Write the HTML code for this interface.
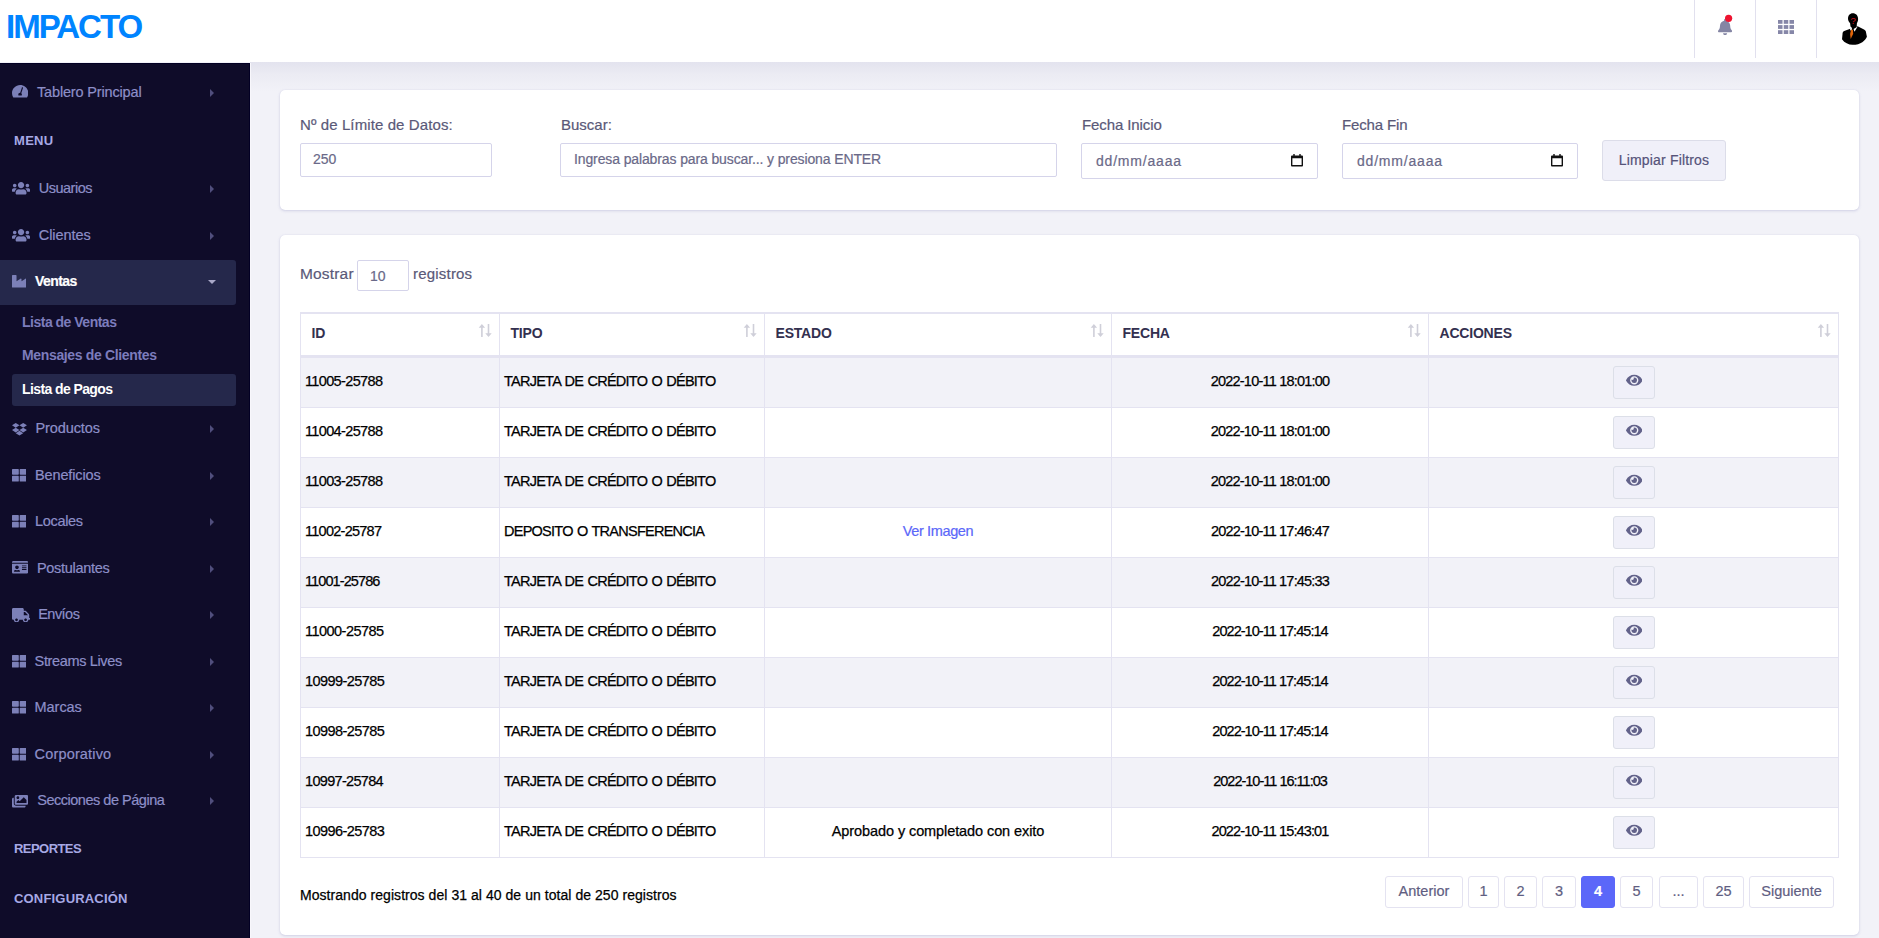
<!DOCTYPE html>
<html lang="es">
<head>
<meta charset="utf-8">
<title>IMPACTO - Lista de Pagos</title>
<style>
*{box-sizing:border-box;margin:0;padding:0}
html,body{width:1879px;height:938px;overflow:hidden}
body{font-family:"Liberation Sans",sans-serif;background:#f2f2f8;color:#000;font-size:14px;position:relative}
/* header */
.hdr{position:absolute;left:0;top:0;width:1879px;height:62px;background:#fff;z-index:5}
.hdr-shadow{position:absolute;left:250px;top:62px;width:1629px;height:30px;background:linear-gradient(#e3e3ee,#ebebf3 40%,#f2f2f8);z-index:1}
.logo{position:absolute;left:6px;top:8px;font-size:33px;line-height:38px;font-weight:700;color:#0084ff;letter-spacing:-2px;white-space:nowrap}
.sep{position:absolute;top:0;width:1px;height:58px;background:#e1e0ee}
.ico{position:absolute}
/* sidebar */
.side{position:absolute;left:0;top:63px;width:250px;height:875px;background:#0f0c29;z-index:4;box-shadow:inset 0 1px 0 #030024,inset -1px 0 0 #030024}
.sline{position:absolute;left:250px;top:63px;width:1px;height:875px;background:#f8f7fc;z-index:3}
.side .it{position:absolute;left:0;width:236px;height:44px;color:#8d8fc8;font-size:14.5px;line-height:44px;white-space:nowrap;letter-spacing:-.15px}
.side .it svg{position:absolute}
.side .it .tx{position:absolute;top:0}
.side .it .ar{position:absolute;left:209.700px;top:19px;width:0;height:0;border-left:4.500px solid #504e7d;border-top:4px solid transparent;border-bottom:4px solid transparent}
.side .it.act{background:#25284b;color:#fff;border-radius:0 3px 3px 0;font-weight:700;height:45px;line-height:43px;font-size:14px;letter-spacing:-.55px}
.side .it.act .ar{left:208.200px;top:20px;border-left:4px solid transparent;border-right:4px solid transparent;border-top:4px solid #a9a8c8;border-bottom:0}
.side .hd{position:absolute;left:14px;color:#a7a9e5;font-size:13px;font-weight:700;letter-spacing:.6px;line-height:16px;white-space:nowrap}
.side .sub{position:absolute;left:22px;color:#7c7cbc;font-size:14px;line-height:18px;white-space:nowrap;font-weight:700;letter-spacing:-.5px}
.side .subact{position:absolute;left:12px;top:311px;width:224px;height:32px;background:#25284b;border-radius:3px}
/* cards */
.card{position:absolute;left:280px;width:1579px;background:#fff;border-radius:5px;box-shadow:0 1px 3px rgba(110,108,175,.24),0 0 1px rgba(110,108,175,.2);z-index:2}
.in{position:absolute;left:1px;top:1px;width:0;height:0}
.lbl{position:absolute;font-size:15px;line-height:18px;color:#5a5978;white-space:nowrap}
.inp{position:absolute;height:34px;border:1px solid #d5d4ea;border-radius:2px;background:#fff;font-size:14px;line-height:30px;color:#6a6988;padding-left:13px;white-space:nowrap}
.btn{position:absolute;left:1322px;top:50px;width:124px;height:41px;border:1px solid #dcdde9;border-radius:3px;background:#f0f0f9;color:#55537a;font-size:14px;line-height:39px;text-align:center;letter-spacing:.17px}
.cal{position:absolute;right:14px;top:10px}
/* table */
table{position:absolute;left:19px;top:76px;width:1539px;border-collapse:separate;border-spacing:0;table-layout:fixed;font-size:14px;border-top:2px solid #e4e3f1;border-right:1px solid #e4e3f1}
th{height:44px;text-align:left;font-weight:700;font-size:14px;color:#33304f;padding:0 0 3px 10.500px;border-left:1px solid #e4e3f1;border-bottom:3px solid #e4e3f1;position:relative;letter-spacing:-.2px}
td{height:50px;border-left:1px solid #e4e3f1;border-bottom:1px solid #e4e3f1;padding:0 0 3px 4px;color:#000;white-space:nowrap;background:#fff;font-size:14.5px;-webkit-text-stroke:.25px #000}
tr.odd td{background:#f2f2f8}
td.c{text-align:center;padding-left:0}
td.k1{letter-spacing:-.7px}
td.k2{letter-spacing:-.75px;word-spacing:1px}
td.k3{letter-spacing:-.09px}
td.k4{letter-spacing:-.79px}
td a{-webkit-text-stroke:.2px #5b67f9;color:#5b67f9;text-decoration:none;letter-spacing:-.36px}
.eye{display:inline-block;width:42px;height:33px;border:1px solid #dcdfe8;border-radius:3px;background:#f0f0f9;vertical-align:middle;position:relative;top:1px}
.eye svg{position:absolute;left:12.100px;top:6.800px}
.srt{position:absolute;right:6.900px;top:10px}
.pg{position:absolute;top:640px;height:32px;border:1px solid #e4e3f1;border-radius:3px;background:#fff;color:#5f5e82;font-size:14.5px;line-height:29px;text-align:center}
.pg.on{background:#5b67f9;border-color:#5b67f9;color:#fff;font-weight:700}
.lbl,.inp,.btn,.pg,.side .it .tx{-webkit-text-stroke-width:.2px}
</style>
</head>
<body>
<div class="hdr">
  <div class="logo">IMPACTO</div>
  <div class="sep" style="left:1694px"></div>
  <div class="sep" style="left:1755px"></div>
  <div class="sep" style="left:1816px"></div>

  <svg class="ico" style="left:1717.900px;top:18.600px" width="14.200" height="16.200" viewBox="0 0 448 512"><path fill="#8485a4" d="M224 512c35.320 0 63.970-28.650 63.970-64H160.030c0 35.350 28.650 64 63.970 64zm215.390-149.710c-19.320-20.760-55.470-51.990-55.470-154.290 0-77.700-54.480-139.900-127.940-155.160V32c0-17.670-14.320-32-31.980-32s-31.980 14.330-31.980 32v20.840C118.560 68.100 64.080 130.300 64.080 208c0 102.300-36.150 133.530-55.470 154.290-6 6.450-8.660 14.160-8.610 21.710.11 16.400 12.980 32 32.100 32h383.800c19.120 0 32-15.600 32.100-32 .05-7.550-2.610-15.270-8.610-21.710z"/></svg>
  <svg class="ico" style="left:1724px;top:14px" width="9" height="9" viewBox="0 0 9 9"><circle cx="4.600" cy="4.300" r="3.600" fill="#ee1330"/></svg>
  <svg class="ico" style="left:1778px;top:20px" width="16" height="14" viewBox="0 0 16 14" fill="#8687a8">
    <rect x="0" y="0" width="4.500" height="3.800"/><rect x="5.750" y="0" width="4.500" height="3.800"/><rect x="11.500" y="0" width="4.500" height="3.800"/>
    <rect x="0" y="5.100" width="4.500" height="3.800"/><rect x="5.750" y="5.100" width="4.500" height="3.800"/><rect x="11.500" y="5.100" width="4.500" height="3.800"/>
    <rect x="0" y="10.200" width="4.500" height="3.800"/><rect x="5.750" y="10.200" width="4.500" height="3.800"/><rect x="11.500" y="10.200" width="4.500" height="3.800"/>
  </svg>
  <svg class="ico" style="left:1841px;top:12px" width="27" height="34" viewBox="0 0 27 34">
    <path fill="#000" d="M11.800 1.300c3.200 0 5.400 2.400 5.300 5.700 0 1.700-.5 3.100-1.200 4.300l-.2 3.300-2.700 2.600-2.300-1.400-1.200-1.200-.4-3.300C8 10.200 7 8.600 7 6.800 7 3.600 8.800 1.300 11.800 1.300z"/>
    <path fill="#000" d="M9.300 16.800 3.200 19c-1.300.5-1.700 1.800-1.700 3.200L1 27.300c2.500 3.600 6.500 5.500 10.600 5.500 4 0 7.300-.9 9.700-2.600 2-1.400 3.800-3.300 4.600-5.500l-1-5c-.2-1-.9-1.700-1.900-2.200l-6.400-3.200z"/>
    <path fill="#fff" d="M9 17.500l.6-2.300 1.400 1.400-.5 3.200zM16.700 14.400 12.600 17.100l.9 2.600z"/>
    <path fill="#e0650a" d="M10.100 17.800h1.800l.3 4-2.500 5.300-.6-5z"/>
    <text x="9.400" y="11.500" font-family="Liberation Sans, sans-serif" font-size="9.500" font-weight="400" fill="#d8101f">?</text>
  </svg>
</div>
<div class="hdr-shadow"></div>
<div class="sline"></div>
<div class="side" id="side">
<div class="it" style="top:7px"><svg style="left:11.7px;top:14.4px" width="16.31" height="14.5" viewBox="0 0 576 512" fill="#7c80b8" fill-rule="evenodd"><path d="M288 32C128.940 32 0 160.940 0 320c0 52.800 14.250 102.260 39.060 144.800 5.610 9.620 16.300 15.200 27.440 15.200h443c11.140 0 21.830-5.580 27.440-15.200C561.750 422.260 576 372.800 576 320c0-159.060-128.940-288-288-288zm63.370 95.360-61.350 184.040c-1.430.24-2.620.6-4.020.6-35.350 0-64 28.650-64 64 0 11.720 3.380 22.550 8.880 32h110.250c5.500-9.450 8.880-20.280 8.880-32 0-19.450-8.860-36.660-22.550-48.400l61.340-184.030c4.190-12.580-2.610-26.170-15.190-30.360-12.580-4.290-26.140 2.580-30.240 14.150z"/></svg><span class="tx" style="left:37.0px;letter-spacing:-0.16px">Tablero Principal</span><i class="ar"></i></div>
<div class="it" style="top:103px"><svg style="left:11.8px;top:15.3px" width="18.12" height="14.5" viewBox="0 0 640 512" fill="#7c80b8"><path d="M96 224c35.300 0 64-28.700 64-64s-28.700-64-64-64-64 28.700-64 64 28.700 64 64 64zm448 0c35.300 0 64-28.700 64-64s-28.700-64-64-64-64 28.700-64 64 28.700 64 64 64zm32 32h-64c-17.600 0-33.500 7.100-45.100 18.600 40.300 22.100 68.900 62 75.100 109.400h66c17.700 0 32-14.300 32-32v-32c0-35.300-28.700-64-64-64zm-256 0c61.900 0 112-50.100 112-112S381.900 32 320 32 208 82.100 208 144s50.100 112 112 112zm76.800 32h-8.300c-20.800 10-43.900 16-68.500 16s-47.600-6-68.500-16h-8.300C179.600 288 128 339.600 128 403.200V432c0 26.500 21.500 48 48 48h288c26.500 0 48-21.500 48-48v-28.800c0-63.600-51.600-115.200-115.200-115.200zm-223.700-13.400C161.500 263.100 145.600 256 128 256H64c-35.300 0-64 28.700-64 64v32c0 17.700 14.300 32 32 32h65.900c6.300-47.400 34.900-87.300 75.200-109.400z"/></svg><span class="tx" style="left:38.8px;letter-spacing:-0.51px">Usuarios</span><i class="ar"></i></div>
<div class="it" style="top:150px"><svg style="left:11.8px;top:15.3px" width="18.12" height="14.5" viewBox="0 0 640 512" fill="#7c80b8"><path d="M96 224c35.300 0 64-28.700 64-64s-28.700-64-64-64-64 28.700-64 64 28.700 64 64 64zm448 0c35.300 0 64-28.700 64-64s-28.700-64-64-64-64 28.700-64 64 28.700 64 64 64zm32 32h-64c-17.600 0-33.500 7.100-45.100 18.600 40.300 22.100 68.900 62 75.100 109.400h66c17.700 0 32-14.300 32-32v-32c0-35.300-28.700-64-64-64zm-256 0c61.900 0 112-50.100 112-112S381.900 32 320 32 208 82.100 208 144s50.100 112 112 112zm76.800 32h-8.300c-20.800 10-43.900 16-68.500 16s-47.600-6-68.500-16h-8.300C179.600 288 128 339.600 128 403.200V432c0 26.500 21.500 48 48 48h288c26.500 0 48-21.500 48-48v-28.800c0-63.600-51.600-115.200-115.200-115.200zm-223.700-13.400C161.500 263.100 145.600 256 128 256H64c-35.300 0-64 28.700-64 64v32c0 17.700 14.300 32 32 32h65.900c6.300-47.400 34.900-87.300 75.200-109.400z"/></svg><span class="tx" style="left:38.8px;letter-spacing:-0.07px">Clientes</span><i class="ar"></i></div>
<div class="it" style="top:343px"><svg style="left:11.9px;top:15.8px" width="14.95" height="14.5" viewBox="0 0 528 512" fill="#7c80b8"><path d="M264.400 116.300l-132 84.300 132 84.300-132 84.300L0 284.100l132.300-84.300L0 116.300 132.300 32l132.100 84.300zM131.600 395.700l132-84.300 132 84.300-132 84.300-132-84.300zm132.800-111.600l132-84.300-132-83.600L395.700 32 528 116.300l-132.300 84.300L528 284.800l-132.300 84.300-131.300-85z"/></svg><span class="tx" style="left:35.5px;letter-spacing:-0.1px">Productos</span><i class="ar"></i></div>
<div class="it" style="top:390px"><svg style="left:11.9px;top:14.6px" width="14.5" height="14.5" viewBox="0 0 512 512" fill="#7c80b8"><path d="M296 32h192c13.255 0 24 10.745 24 24v160c0 13.255-10.745 24-24 24H296c-13.255 0-24-10.745-24-24V56c0-13.255 10.745-24 24-24zm-80 0H24C10.745 32 0 42.745 0 56v160c0 13.255 10.745 24 24 24h192c13.255 0 24-10.745 24-24V56c0-13.255-10.745-24-24-24zM0 296v160c0 13.255 10.745 24 24 24h192c13.255 0 24-10.745 24-24V296c0-13.255-10.745-24-24-24H24c-13.255 0-24 10.745-24 24zm296 184h192c13.255 0 24-10.745 24-24V296c0-13.255-10.745-24-24-24H296c-13.255 0-24 10.745-24 24v160c0 13.255 10.745 24 24 24z"/></svg><span class="tx" style="left:35.0px;letter-spacing:-0.13px">Beneficios</span><i class="ar"></i></div>
<div class="it" style="top:436px"><svg style="left:11.9px;top:15.1px" width="14.5" height="14.5" viewBox="0 0 512 512" fill="#7c80b8"><path d="M296 32h192c13.255 0 24 10.745 24 24v160c0 13.255-10.745 24-24 24H296c-13.255 0-24-10.745-24-24V56c0-13.255 10.745-24 24-24zm-80 0H24C10.745 32 0 42.745 0 56v160c0 13.255 10.745 24 24 24h192c13.255 0 24-10.745 24-24V56c0-13.255-10.745-24-24-24zM0 296v160c0 13.255 10.745 24 24 24h192c13.255 0 24-10.745 24-24V296c0-13.255-10.745-24-24-24H24c-13.255 0-24 10.745-24 24zm296 184h192c13.255 0 24-10.745 24-24V296c0-13.255-10.745-24-24-24H296c-13.255 0-24 10.745-24 24v160c0 13.255 10.745 24 24 24z"/></svg><span class="tx" style="left:35.0px;letter-spacing:-0.32px">Locales</span><i class="ar"></i></div>
<div class="it" style="top:483px"><svg style="left:11.9px;top:14.4px" width="16.31" height="14.5" viewBox="0 0 576 512" fill="#7c80b8" fill-rule="evenodd"><path d="M528 32H48C21.500 32 0 53.500 0 80v16h576V80c0-26.500-21.500-48-48-48zM0 432c0 26.500 21.500 48 48 48h480c26.500 0 48-21.500 48-48V128H0v304zm352-232c0-4.400 3.600-8 8-8h144c4.400 0 8 3.600 8 8v16c0 4.400-3.600 8-8 8H360c-4.400 0-8-3.600-8-8v-16zm0 64c0-4.400 3.600-8 8-8h144c4.400 0 8 3.600 8 8v16c0 4.400-3.600 8-8 8H360c-4.400 0-8-3.600-8-8v-16zm0 64c0-4.400 3.600-8 8-8h144c4.400 0 8 3.600 8 8v16c0 4.400-3.600 8-8 8H360c-4.400 0-8-3.600-8-8v-16zM176 192c35.300 0 64 28.700 64 64s-28.700 64-64 64-64-28.700-64-64 28.700-64 64-64zM67.100 396.200C75.500 370.500 99.600 352 128 352h8.200c12.300 5.100 25.700 8 39.800 8s27.600-2.900 39.800-8h8.200c28.400 0 52.500 18.500 60.900 44.200 3.200 9.900-5.200 19.800-15.600 19.800H82.700c-10.400 0-18.800-10-15.600-19.800z"/></svg><span class="tx" style="left:36.9px;letter-spacing:-0.3px">Postulantes</span><i class="ar"></i></div>
<div class="it" style="top:529px"><svg style="left:11.8px;top:15.7px" width="18.12" height="14.5" viewBox="0 0 640 512" fill="#7c80b8" fill-rule="evenodd"><path d="M624 352h-16V243.900c0-12.700-5.100-24.900-14.100-33.900L494 110.100c-9-9-21.200-14.100-33.900-14.100H416V48c0-26.500-21.500-48-48-48H48C21.500 0 0 21.500 0 48v320c0 26.500 21.500 48 48 48h16c0 53 43 96 96 96s96-43 96-96h128c0 53 43 96 96 96s96-43 96-96h48c8.800 0 16-7.200 16-16v-32c0-8.800-7.200-16-16-16zM160 464c-26.500 0-48-21.500-48-48s21.500-48 48-48 48 21.500 48 48-21.500 48-48 48zm320 0c-26.500 0-48-21.500-48-48s21.500-48 48-48 48 21.500 48 48-21.500 48-48 48zm80-208H416V144h44.100l99.900 99.900V256z"/></svg><span class="tx" style="left:38.2px;letter-spacing:-0.52px">Envíos</span><i class="ar"></i></div>
<div class="it" style="top:576px"><svg style="left:11.9px;top:14.6px" width="14.5" height="14.5" viewBox="0 0 512 512" fill="#7c80b8"><path d="M296 32h192c13.255 0 24 10.745 24 24v160c0 13.255-10.745 24-24 24H296c-13.255 0-24-10.745-24-24V56c0-13.255 10.745-24 24-24zm-80 0H24C10.745 32 0 42.745 0 56v160c0 13.255 10.745 24 24 24h192c13.255 0 24-10.745 24-24V56c0-13.255-10.745-24-24-24zM0 296v160c0 13.255 10.745 24 24 24h192c13.255 0 24-10.745 24-24V296c0-13.255-10.745-24-24-24H24c-13.255 0-24 10.745-24 24zm296 184h192c13.255 0 24-10.745 24-24V296c0-13.255-10.745-24-24-24H296c-13.255 0-24 10.745-24 24v160c0 13.255 10.745 24 24 24z"/></svg><span class="tx" style="left:34.6px;letter-spacing:-0.36px">Streams Lives</span><i class="ar"></i></div>
<div class="it" style="top:622px"><svg style="left:11.9px;top:15.1px" width="14.5" height="14.5" viewBox="0 0 512 512" fill="#7c80b8"><path d="M296 32h192c13.255 0 24 10.745 24 24v160c0 13.255-10.745 24-24 24H296c-13.255 0-24-10.745-24-24V56c0-13.255 10.745-24 24-24zm-80 0H24C10.745 32 0 42.745 0 56v160c0 13.255 10.745 24 24 24h192c13.255 0 24-10.745 24-24V56c0-13.255-10.745-24-24-24zM0 296v160c0 13.255 10.745 24 24 24h192c13.255 0 24-10.745 24-24V296c0-13.255-10.745-24-24-24H24c-13.255 0-24 10.745-24 24zm296 184h192c13.255 0 24-10.745 24-24V296c0-13.255-10.745-24-24-24H296c-13.255 0-24 10.745-24 24v160c0 13.255 10.745 24 24 24z"/></svg><span class="tx" style="left:34.6px;letter-spacing:-0.06px">Marcas</span><i class="ar"></i></div>
<div class="it" style="top:669px"><svg style="left:11.9px;top:14.6px" width="14.5" height="14.5" viewBox="0 0 512 512" fill="#7c80b8"><path d="M296 32h192c13.255 0 24 10.745 24 24v160c0 13.255-10.745 24-24 24H296c-13.255 0-24-10.745-24-24V56c0-13.255 10.745-24 24-24zm-80 0H24C10.745 32 0 42.745 0 56v160c0 13.255 10.745 24 24 24h192c13.255 0 24-10.745 24-24V56c0-13.255-10.745-24-24-24zM0 296v160c0 13.255 10.745 24 24 24h192c13.255 0 24-10.745 24-24V296c0-13.255-10.745-24-24-24H24c-13.255 0-24 10.745-24 24zm296 184h192c13.255 0 24-10.745 24-24V296c0-13.255-10.745-24-24-24H296c-13.255 0-24 10.745-24 24v160c0 13.255 10.745 24 24 24z"/></svg><span class="tx" style="left:34.6px;letter-spacing:0.16px">Corporativo</span><i class="ar"></i></div>
<div class="it" style="top:715px"><svg style="left:11.9px;top:15.6px" width="16.31" height="14.5" viewBox="0 0 576 512" fill="#7c80b8" fill-rule="evenodd"><path d="M480 416v16c0 26.510-21.490 48-48 48H48c-26.510 0-48-21.490-48-48V176c0-26.510 21.490-48 48-48h16v208c0 44.112 35.888 80 80 80h336zm96-80V80c0-26.510-21.490-48-48-48H144c-26.510 0-48 21.490-48 48v256c0 26.510 21.490 48 48 48h384c26.510 0 48-21.490 48-48zM256 128c0 26.510-21.490 48-48 48s-48-21.490-48-48 21.490-48 48-48 48 21.490 48 48zm-96 144l55.515-55.515c4.686-4.686 12.284-4.686 16.971 0L272 256l135.515-135.515c4.686-4.686 12.284-4.686 16.971 0L512 208v112H160v-48z"/></svg><span class="tx" style="left:37.2px;letter-spacing:-0.48px">Secciones de Página</span><i class="ar"></i></div>
<div class="it act" style="top:197px"><svg style="left:11.9px;top:14.1px" width="14.5" height="14.5" viewBox="0 0 512 512" fill="#7c80b8"><path d="M475.115 163.781 336 252.309v-68.280c0-18.916-20.931-30.399-36.885-20.248L160 252.309V56c0-13.255-10.745-24-24-24H24C10.745 32 0 42.745 0 56v400c0 13.255 10.745 24 24 24h464c13.255 0 24-10.745 24-24V184.029c0-18.917-20.931-30.399-36.885-20.248z"/></svg><span class="tx" style="left:35px">Ventas</span><i class="ar"></i></div>
<div class="hd" style="top:69.6px;letter-spacing:0.3px">MENU</div>
<div class="hd" style="top:777.6px;letter-spacing:-0.55px">REPORTES</div>
<div class="hd" style="top:827.8px;letter-spacing:0.18px">CONFIGURACIÓN</div>
<div class="subact"></div>
<div class="sub" style="top:250px;letter-spacing:-0.5px">Lista de Ventas</div>
<div class="sub" style="top:283px;letter-spacing:-0.35px">Mensajes de Clientes</div>
<div class="sub" style="top:317px;color:#fff;letter-spacing:-0.6px">Lista de Pagos</div>
</div>
<div class="card" id="c1" style="top:90px;height:120px"><div class="in">
<div class="lbl" style="left:19px;top:25px;letter-spacing:.1px">Nº de Límite de Datos:</div>
<div class="lbl" style="left:280px;top:25px">Buscar:</div>
<div class="lbl" style="left:801px;top:25px;letter-spacing:-.1px">Fecha Inicio</div>
<div class="lbl" style="left:1061px;top:25px;letter-spacing:-.15px">Fecha Fin</div>
<div class="inp" style="left:19px;top:52px;width:192px;padding-left:12px">250</div>
<div class="inp" style="left:279px;top:52px;width:497px;letter-spacing:-.12px">Ingresa palabras para buscar... y presiona ENTER</div>
<div class="inp" style="left:800px;top:52px;width:237px;height:36px;line-height:35px;padding-left:14px;letter-spacing:.8px">dd/mm/aaaa<svg class="cal" width="12" height="12.5" viewBox="0 0 13 13" preserveAspectRatio="none"><path fill="#111" fill-rule="evenodd" d="M2.500 0h1.500v1.500h5V0h1.500v1.500H12a1 1 0 0 1 1 1V12a1 1 0 0 1-1 1H1a1 1 0 0 1-1-1V2.500a1 1 0 0 1 1-1h1.500zM1.500 4.500v7h10v-7z"/></svg></div>
<div class="inp" style="left:1061px;top:52px;width:236px;height:36px;line-height:35px;padding-left:14px;letter-spacing:.8px">dd/mm/aaaa<svg class="cal" width="12" height="12.5" viewBox="0 0 13 13" preserveAspectRatio="none"><path fill="#111" fill-rule="evenodd" d="M2.500 0h1.500v1.500h5V0h1.500v1.500H12a1 1 0 0 1 1 1V12a1 1 0 0 1-1 1H1a1 1 0 0 1-1-1V2.500a1 1 0 0 1 1-1h1.500zM1.500 4.500v7h10v-7z"/></svg></div>
<div class="btn" style="left:1321px;top:49px">Limpiar Filtros</div>
</div>
</div><div class="card" id="c2" style="top:235px;height:700px"><div class="in">
<div class="lbl" style="left:19px;top:29px;font-size:15.5px;letter-spacing:.17px">Mostrar</div>
<div class="inp" style="left:76px;top:24px;width:52px;height:31px;line-height:31px;padding-left:12px;font-size:14px">10</div>
<div class="lbl" style="left:132px;top:29px;letter-spacing:.2px">registros</div>
<table><colgroup><col style="width:199px"><col style="width:265px"><col style="width:347px"><col style="width:317px"><col style="width:410px"></colgroup>
<thead><tr><th>ID<svg class="srt" width="14" height="14" viewBox="0 0 14 14" fill="#cfcfd9"><path d="M3.900 0 7.100 3.700H4.700V13H3.100V3.700H.7zM9.700 0h1.600v9.300h2.400L10.500 13 7.300 9.300h2.400z"/></svg></th><th>TIPO<svg class="srt" width="14" height="14" viewBox="0 0 14 14" fill="#cfcfd9"><path d="M3.900 0 7.100 3.700H4.700V13H3.100V3.700H.7zM9.700 0h1.600v9.300h2.400L10.500 13 7.300 9.300h2.400z"/></svg></th><th>ESTADO<svg class="srt" width="14" height="14" viewBox="0 0 14 14" fill="#cfcfd9"><path d="M3.900 0 7.100 3.700H4.700V13H3.100V3.700H.7zM9.700 0h1.600v9.300h2.400L10.500 13 7.300 9.300h2.400z"/></svg></th><th>FECHA<svg class="srt" width="14" height="14" viewBox="0 0 14 14" fill="#cfcfd9"><path d="M3.900 0 7.100 3.700H4.700V13H3.100V3.700H.7zM9.700 0h1.600v9.300h2.400L10.500 13 7.300 9.300h2.400z"/></svg></th><th>ACCIONES<svg class="srt" width="14" height="14" viewBox="0 0 14 14" fill="#cfcfd9"><path d="M3.900 0 7.100 3.700H4.700V13H3.100V3.700H.7zM9.700 0h1.600v9.300h2.400L10.500 13 7.300 9.300h2.400z"/></svg></th></tr></thead>
<tbody>
<tr class="odd"><td class="k1" style="letter-spacing:-0.64px">11005-25788</td><td class="k2">TARJETA DE CRÉDITO O DÉBITO</td><td class="c k3"></td><td class="c k4">2022-10-11 18:01:00</td><td class="c"><span class="eye"><svg width="16.5" height="14.67" viewBox="0 0 576 512" fill="#62628a"><path d="M572.520 241.400C518.290 135.590 410.930 64 288 64S57.680 135.640 3.480 241.410a32.350 32.350 0 0 0 0 29.190C57.710 376.410 165.070 448 288 448s230.320-71.640 284.520-177.410a32.350 32.350 0 0 0 0-29.190zM288 400a144 144 0 1 1 144-144 143.930 143.930 0 0 1-144 144zm0-240a95.310 95.310 0 0 0-25.310 3.790 47.850 47.850 0 0 1-66.900 66.900A95.780 95.780 0 1 0 288 160z"/></svg></span></td></tr>
<tr><td class="k1" style="letter-spacing:-0.64px">11004-25788</td><td class="k2">TARJETA DE CRÉDITO O DÉBITO</td><td class="c k3"></td><td class="c k4">2022-10-11 18:01:00</td><td class="c"><span class="eye"><svg width="16.5" height="14.67" viewBox="0 0 576 512" fill="#62628a"><path d="M572.520 241.400C518.290 135.590 410.930 64 288 64S57.680 135.640 3.480 241.410a32.350 32.350 0 0 0 0 29.190C57.710 376.410 165.070 448 288 448s230.320-71.640 284.520-177.410a32.350 32.350 0 0 0 0-29.190zM288 400a144 144 0 1 1 144-144 143.930 143.930 0 0 1-144 144zm0-240a95.310 95.310 0 0 0-25.310 3.790 47.850 47.850 0 0 1-66.900 66.900A95.780 95.780 0 1 0 288 160z"/></svg></span></td></tr>
<tr class="odd"><td class="k1" style="letter-spacing:-0.64px">11003-25788</td><td class="k2">TARJETA DE CRÉDITO O DÉBITO</td><td class="c k3"></td><td class="c k4">2022-10-11 18:01:00</td><td class="c"><span class="eye"><svg width="16.5" height="14.67" viewBox="0 0 576 512" fill="#62628a"><path d="M572.520 241.400C518.290 135.590 410.930 64 288 64S57.680 135.640 3.480 241.410a32.350 32.350 0 0 0 0 29.190C57.710 376.410 165.070 448 288 448s230.320-71.640 284.520-177.410a32.350 32.350 0 0 0 0-29.190zM288 400a144 144 0 1 1 144-144 143.930 143.930 0 0 1-144 144zm0-240a95.310 95.310 0 0 0-25.310 3.790 47.850 47.850 0 0 1-66.900 66.900A95.780 95.780 0 1 0 288 160z"/></svg></span></td></tr>
<tr><td class="k1" style="letter-spacing:-0.74px">11002-25787</td><td class="k2">DEPOSITO O TRANSFERENCIA</td><td class="c k3"><a>Ver Imagen</a></td><td class="c k4" style="letter-spacing:-0.81px">2022-10-11 17:46:47</td><td class="c"><span class="eye"><svg width="16.5" height="14.67" viewBox="0 0 576 512" fill="#62628a"><path d="M572.520 241.400C518.290 135.590 410.930 64 288 64S57.680 135.640 3.480 241.410a32.350 32.350 0 0 0 0 29.190C57.710 376.410 165.070 448 288 448s230.320-71.640 284.520-177.410a32.350 32.350 0 0 0 0-29.190zM288 400a144 144 0 1 1 144-144 143.930 143.930 0 0 1-144 144zm0-240a95.310 95.310 0 0 0-25.310 3.790 47.850 47.850 0 0 1-66.900 66.900A95.780 95.780 0 1 0 288 160z"/></svg></span></td></tr>
<tr class="odd"><td class="k1" style="letter-spacing:-0.9px">11001-25786</td><td class="k2">TARJETA DE CRÉDITO O DÉBITO</td><td class="c k3"></td><td class="c k4" style="letter-spacing:-0.81px">2022-10-11 17:45:33</td><td class="c"><span class="eye"><svg width="16.5" height="14.67" viewBox="0 0 576 512" fill="#62628a"><path d="M572.520 241.400C518.290 135.590 410.930 64 288 64S57.680 135.640 3.480 241.410a32.350 32.350 0 0 0 0 29.190C57.710 376.410 165.070 448 288 448s230.320-71.640 284.520-177.410a32.350 32.350 0 0 0 0-29.190zM288 400a144 144 0 1 1 144-144 143.930 143.930 0 0 1-144 144zm0-240a95.310 95.310 0 0 0-25.310 3.790 47.850 47.850 0 0 1-66.900 66.900A95.780 95.780 0 1 0 288 160z"/></svg></span></td></tr>
<tr><td class="k1" style="letter-spacing:-0.53px">11000-25785</td><td class="k2">TARJETA DE CRÉDITO O DÉBITO</td><td class="c k3"></td><td class="c k4" style="letter-spacing:-0.96px">2022-10-11 17:45:14</td><td class="c"><span class="eye"><svg width="16.5" height="14.67" viewBox="0 0 576 512" fill="#62628a"><path d="M572.520 241.400C518.290 135.590 410.930 64 288 64S57.680 135.640 3.480 241.410a32.350 32.350 0 0 0 0 29.190C57.710 376.410 165.070 448 288 448s230.320-71.640 284.520-177.410a32.350 32.350 0 0 0 0-29.190zM288 400a144 144 0 1 1 144-144 143.930 143.930 0 0 1-144 144zm0-240a95.310 95.310 0 0 0-25.310 3.790 47.850 47.850 0 0 1-66.900 66.900A95.780 95.780 0 1 0 288 160z"/></svg></span></td></tr>
<tr class="odd"><td class="k1" style="letter-spacing:-0.57px">10999-25785</td><td class="k2">TARJETA DE CRÉDITO O DÉBITO</td><td class="c k3"></td><td class="c k4" style="letter-spacing:-0.96px">2022-10-11 17:45:14</td><td class="c"><span class="eye"><svg width="16.5" height="14.67" viewBox="0 0 576 512" fill="#62628a"><path d="M572.520 241.400C518.290 135.590 410.930 64 288 64S57.680 135.640 3.480 241.410a32.350 32.350 0 0 0 0 29.190C57.710 376.410 165.070 448 288 448s230.320-71.640 284.520-177.410a32.350 32.350 0 0 0 0-29.190zM288 400a144 144 0 1 1 144-144 143.930 143.930 0 0 1-144 144zm0-240a95.310 95.310 0 0 0-25.310 3.790 47.850 47.850 0 0 1-66.900 66.900A95.780 95.780 0 1 0 288 160z"/></svg></span></td></tr>
<tr><td class="k1" style="letter-spacing:-0.57px">10998-25785</td><td class="k2">TARJETA DE CRÉDITO O DÉBITO</td><td class="c k3"></td><td class="c k4" style="letter-spacing:-0.96px">2022-10-11 17:45:14</td><td class="c"><span class="eye"><svg width="16.5" height="14.67" viewBox="0 0 576 512" fill="#62628a"><path d="M572.520 241.400C518.290 135.590 410.930 64 288 64S57.680 135.640 3.480 241.410a32.350 32.350 0 0 0 0 29.190C57.710 376.410 165.070 448 288 448s230.320-71.640 284.520-177.410a32.350 32.350 0 0 0 0-29.190zM288 400a144 144 0 1 1 144-144 143.930 143.930 0 0 1-144 144zm0-240a95.310 95.310 0 0 0-25.310 3.790 47.850 47.850 0 0 1-66.900 66.900A95.780 95.780 0 1 0 288 160z"/></svg></span></td></tr>
<tr class="odd"><td class="k1" style="letter-spacing:-0.68px">10997-25784</td><td class="k2">TARJETA DE CRÉDITO O DÉBITO</td><td class="c k3"></td><td class="c k4" style="letter-spacing:-0.99px">2022-10-11 16:11:03</td><td class="c"><span class="eye"><svg width="16.5" height="14.67" viewBox="0 0 576 512" fill="#62628a"><path d="M572.520 241.400C518.290 135.590 410.930 64 288 64S57.680 135.640 3.480 241.410a32.350 32.350 0 0 0 0 29.190C57.710 376.410 165.070 448 288 448s230.320-71.640 284.520-177.410a32.350 32.350 0 0 0 0-29.190zM288 400a144 144 0 1 1 144-144 143.930 143.930 0 0 1-144 144zm0-240a95.310 95.310 0 0 0-25.310 3.790 47.850 47.850 0 0 1-66.900 66.900A95.780 95.780 0 1 0 288 160z"/></svg></span></td></tr>
<tr><td class="k1" style="letter-spacing:-0.57px">10996-25783</td><td class="k2">TARJETA DE CRÉDITO O DÉBITO</td><td class="c k3">Aprobado y completado con exito</td><td class="c k4" style="letter-spacing:-0.87px">2022-10-11 15:43:01</td><td class="c"><span class="eye"><svg width="16.5" height="14.67" viewBox="0 0 576 512" fill="#62628a"><path d="M572.520 241.400C518.290 135.590 410.930 64 288 64S57.680 135.640 3.480 241.410a32.350 32.350 0 0 0 0 29.190C57.710 376.410 165.070 448 288 448s230.320-71.640 284.520-177.410a32.350 32.350 0 0 0 0-29.190zM288 400a144 144 0 1 1 144-144 143.930 143.930 0 0 1-144 144zm0-240a95.310 95.310 0 0 0-25.310 3.790 47.850 47.850 0 0 1-66.900 66.900A95.780 95.780 0 1 0 288 160z"/></svg></span></td></tr>
</tbody></table>

<div style="position:absolute;left:19px;top:651px;font-size:14px;line-height:17px;white-space:nowrap;letter-spacing:.05px;-webkit-text-stroke:.25px #000">Mostrando registros del 31 al 40 de un total de 250 registros</div>
<div class="pg" style="left:1104px;width:78px;top:640px">Anterior</div>
<div class="pg" style="left:1187px;width:31px;top:640px">1</div>
<div class="pg" style="left:1223px;width:33px;top:640px">2</div>
<div class="pg" style="left:1261px;width:34px;top:640px">3</div>
<div class="pg on" style="left:1300px;width:34px;top:640px">4</div>
<div class="pg" style="left:1339px;width:33px;top:640px">5</div>
<div class="pg" style="left:1378px;width:39px;top:640px">...</div>
<div class="pg" style="left:1422px;width:41px;top:640px">25</div>
<div class="pg" style="left:1468px;width:85px;top:640px">Siguiente</div>
</div></div>
</body>
</html>
